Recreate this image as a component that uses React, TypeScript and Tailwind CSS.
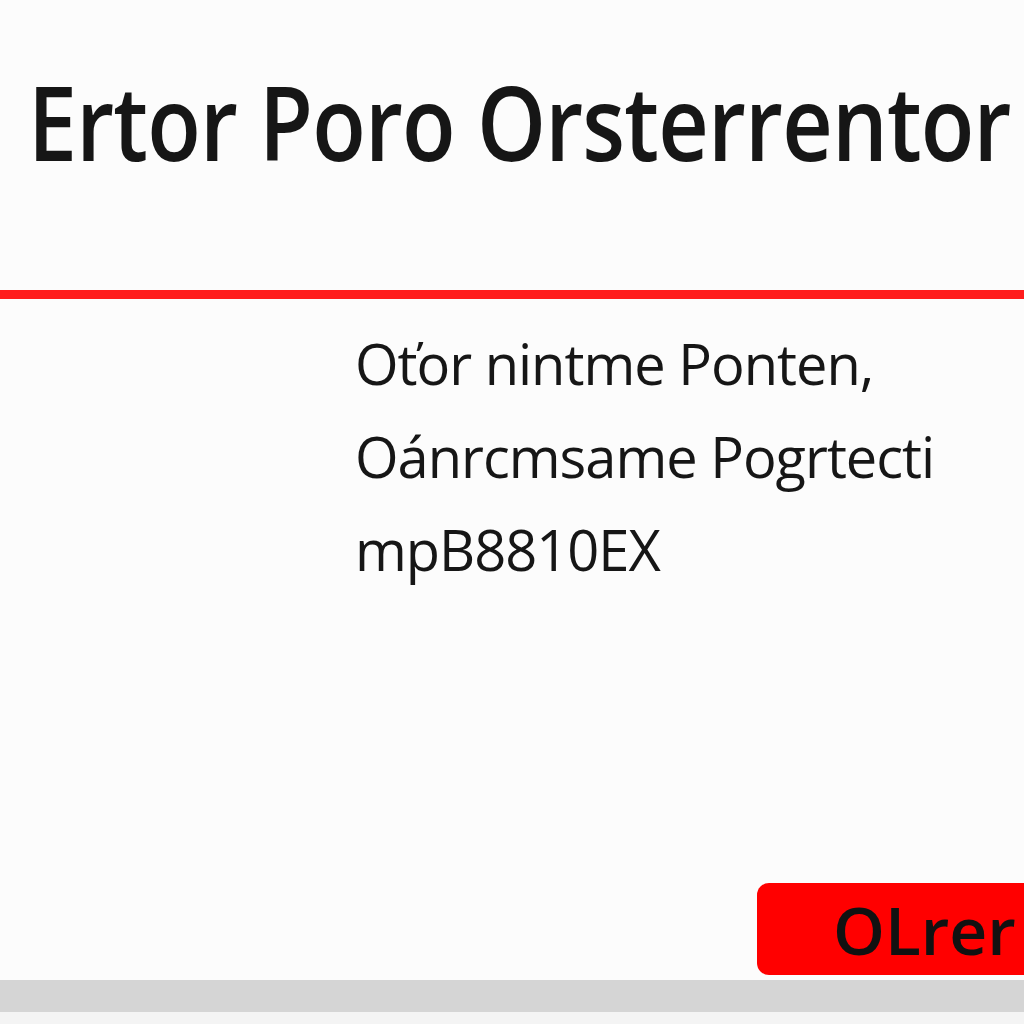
import React from 'react';

const lines = ['Oťor nintme Ponten,', 'Oánrcmsame Pogrtecti', 'mpB8810EX'];

export default function App() {
  return (
    <div className="w-full h-[1024px] overflow-hidden bg-[#fcfcfc] flex flex-col text-[#161616] font-['Open_Sans',sans-serif]">
      <header className="h-[290px] pl-[28px] pt-[56px]">
        <h1 className="inline-block origin-left scale-x-[0.845] text-[104px] leading-[1.25] font-semibold tracking-[-1px] whitespace-nowrap">
          Ertor Poro Orsterrentor
        </h1>
      </header>
      <div className="h-[9px] bg-[#ff1c1c]" />
      <main className="flex-1 flex flex-col pl-[355px] pt-[28px] gap-[20px]">
        {lines.map((line, i) => (
          <p key={i} className="text-[56px] leading-[1.3] tracking-[-1px] whitespace-nowrap">
            {line}
          </p>
        ))}
      </main>
      <div className="flex pb-[5px]">
        <button className="ml-[757px] w-[300px] h-[92px] shrink-0 rounded-xl bg-[#ff0000] text-left pl-[76px] text-[66px] font-semibold text-[#111] leading-none">
          OLrer
        </button>
      </div>
      <div className="h-[32px] bg-[#d5d5d5]" />
      <div className="h-[12px] bg-[#f4f4f4]" />
    </div>
  );
}
